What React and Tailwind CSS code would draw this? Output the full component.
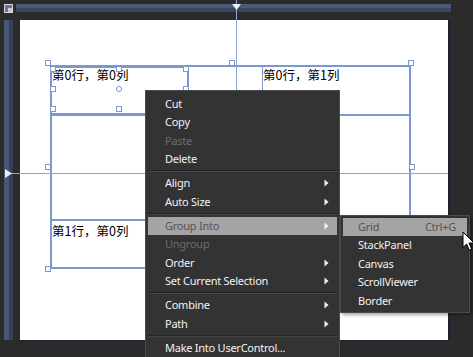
import React from "react";

const handles = [
  // grid adorner handles
  [48, 63, "sq"], [232, 63, "sq"], [411, 63, "sq"],
  [48, 167, "sq"], [412, 167, "sq"], [48, 269, "sq"],
  // selected cell handles
  [53, 69, "sq"], [119, 69, "sq"], [186, 69, "sq"],
  [53, 89, "sq"], [119, 89, "ci"], [186, 89, "sq"],
  [53, 109, "sq"], [119, 109, "sq"], [186, 109, "sq"],
];

function Arrow() {
  return (
    <svg width="5" height="8" viewBox="0 0 5 8" className="block">
      <polygon points="0.5,0.5 4.5,4 0.5,7.5" fill="#f0f0f0" />
    </svg>
  );
}

function Item({ label, arrow, disabled, active }) {
  return (
    <div
      className={
        "h-[18.5px] flex items-center justify-between pl-[17px] pr-[8px] " +
        (active ? "bg-[#a4a4a4] text-[#555555]" : disabled ? "text-[#6c6c6c]" : "text-[#f2f2f2]")
      }
    >
      <span className="leading-none -mt-px">{label}</span>
      {arrow ? <Arrow /> : null}
    </div>
  );
}

function Sep() {
  return (
    <div className="h-[5.5px] flex flex-col justify-center">
      <div className="h-px bg-[#242424]" />
      <div className="h-px bg-[#444444]" />
    </div>
  );
}

export default function App() {
  return (
    <div
      className="relative w-[473px] h-[357px] overflow-hidden bg-[#2b2b2b] text-[11px] tracking-[-0.25px]"
      style={{ fontFamily: '"Noto Sans", "Open Sans", sans-serif' }}
    >
      {/* top row: icon + horizontal ruler */}
      <div className="flex h-[20px]">
        <div className="ml-[4px] mt-[4px] w-[9px] h-[9px] border border-[#d8d8d8] bg-[#6a7390] flex items-end justify-end">
          <div className="w-[4px] h-[4px] bg-[#c6cbd8]" />
        </div>
        <div className="ml-[3px] mt-[4px] w-[435px] h-[8px] flex flex-col">
          <div className="h-[4px] bg-[#4d5878]" />
          <div className="h-[4px] bg-[#3b465f]" />
        </div>
      </div>

      {/* second row: vertical ruler + canvas */}
      <div className="flex">
        <div className="ml-[4px] w-[9px] h-[320px] flex">
          <div className="w-[5px] bg-[#4a5676]" />
          <div className="w-[4px] bg-[#36405a]" />
        </div>
        <div className="ml-[7px] w-[430px] h-[321px] bg-[#1e2133] pr-[2px] pb-[1px]">
          <div className="relative w-[428px] h-[320px] bg-white text-black tracking-normal">
            {/* grid outer border */}
            <div className="absolute left-[30px] top-[45px] w-[361px] h-[204px] border-2 border-[#7b98d2]" />
            {/* row 0 line */}
            <div className="absolute left-[30px] top-[94px] w-[361px] h-[2px] bg-[#7b98d2]" />
            {/* row 1 top line */}
            <div className="absolute left-[30px] top-[199px] w-[361px] h-[2px] bg-[#7b98d2]" />
            {/* column line in row 0 */}
            <div className="absolute left-[242px] top-[46px] w-[1px] h-[49px] bg-[#7b98d2]" />
            {/* selected cell */}
            <div className="absolute left-[30px] top-[46px] w-[139px] h-[49px] border-2 border-[#7b98d2]" />

            <div
              className="absolute left-[32px] top-[47px] text-[12.5px] leading-[16px]"
              style={{ fontFamily: '"Noto Sans CJK SC", "Noto Sans", sans-serif' }}
            >
              第0行，第0列
            </div>
            <div
              className="absolute left-[243px] top-[47px] text-[12.5px] leading-[16px]"
              style={{ fontFamily: '"Noto Sans CJK SC", "Noto Sans", sans-serif' }}
            >
              第0行，第1列
            </div>
            <div
              className="absolute left-[32px] top-[203px] text-[12.5px] leading-[16px]"
              style={{ fontFamily: '"Noto Sans CJK SC", "Noto Sans", sans-serif' }}
            >
              第1行，第0列
            </div>
          </div>
        </div>
      </div>

      {/* guide lines across ruler and canvas */}
      <div className="absolute left-[236px] top-0 w-px h-[340px] bg-[#8aa5d9]" />
      <div className="absolute left-[5px] top-[173px] w-[443px] h-px bg-[#8aa5d9]" />
      {/* ruler markers */}
      <svg className="absolute left-[232px] top-[4px]" width="9" height="6" viewBox="0 0 9 6">
        <polygon points="0,0 9,0 4.5,6" fill="#e8eef8" />
      </svg>
      <svg className="absolute left-[5px] top-[169px]" width="7" height="9" viewBox="0 0 7 9">
        <polygon points="0,0 7,4.5 0,9" fill="#e8eef8" />
      </svg>

      {/* handles */}
      {handles.map(([x, y, kind], i) => (
        <div
          key={i}
          className={
            "absolute w-[6px] h-[6px] bg-white border border-[#7b98d2] " +
            (kind === "ci" ? "rounded-full" : "")
          }
          style={{ left: x - 3, top: y - 3 }}
        />
      ))}

      {/* context menu */}
      <div className="absolute left-[145px] top-[90px] w-[195px] h-[280px] bg-[#333333] border border-[#4a4a4a] pt-[3.5px] px-[2px]">
        <Item label="Cut" />
        <Item label="Copy" />
        <Item label="Paste" disabled />
        <Item label="Delete" />
        <Sep />
        <Item label="Align" arrow />
        <Item label="Auto Size" arrow />
        <Sep />
        <Item label="Group Into" arrow active />
        <Item label="Ungroup" disabled />
        <Item label="Order" arrow />
        <Item label="Set Current Selection" arrow />
        <Sep />
        <Item label="Combine" arrow />
        <Item label="Path" arrow />
        <Sep />
        <Item label="Make Into UserControl..." />
      </div>

      {/* submenu */}
      <div className="absolute left-[340px] top-[215px] w-[130px] bg-[#333333] border border-[#4a4a4a] py-[1.5px] px-[2px] shadow-[2px_2px_3px_rgba(0,0,0,0.35)]">
        <div className="h-[18.5px] flex items-center justify-between pl-[15px] pr-[11px] bg-[#a4a4a4] text-[#555555]">
          <span className="leading-none -mt-px">Grid</span>
          <span className="leading-none -mt-px">Ctrl+G</span>
        </div>
        {["StackPanel", "Canvas", "ScrollViewer", "Border"].map((t) => (
          <div key={t} className="h-[18.5px] flex items-center pl-[15px] text-[#f2f2f2]">
            <span className="leading-none -mt-px">{t}</span>
          </div>
        ))}
      </div>

      {/* mouse cursor */}
      <svg className="absolute left-[462px] top-[231px]" width="13" height="21" viewBox="0 0 13 21">
        <path
          d="M1 1 L1 16.5 L4.6 13 L7.2 19 L9.6 18 L7 12 L12 12 Z"
          fill="#ffffff"
          stroke="#000000"
          strokeWidth="1"
          strokeLinejoin="miter"
        />
      </svg>
    </div>
  );
}
